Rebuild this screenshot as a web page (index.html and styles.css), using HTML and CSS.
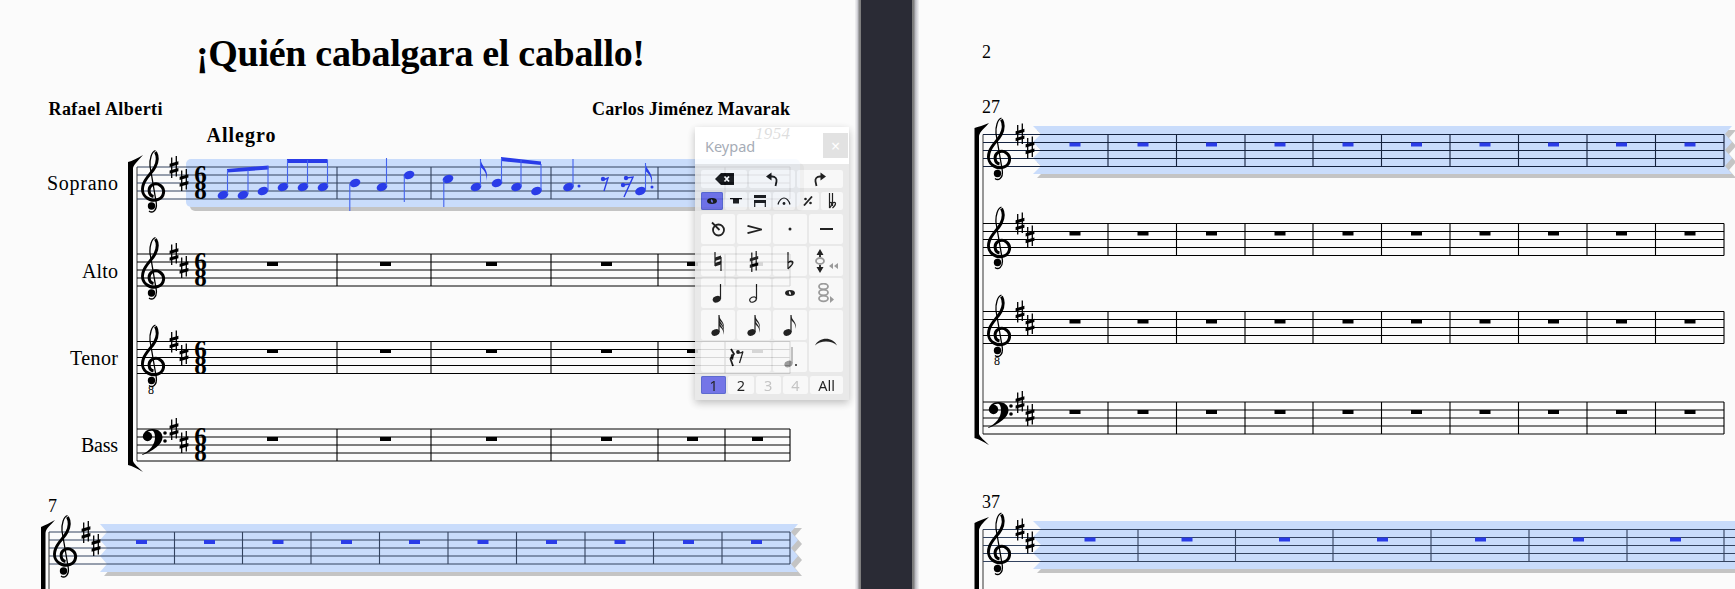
FILE: index.html
```html
<!DOCTYPE html>
<html lang="es">
<head>
<meta charset="utf-8">
<title>¡Quién cabalgara el caballo!</title>
<link rel="stylesheet" href="styles.css">
</head>
<body>
<svg class="defs" width="0" height="0" aria-hidden="true">
  <defs>
    <g id="treble">
      <path class="thick" d="M11.500 5.500C6.500 4.500 5.500-3 10-6C16-9.500 22.500-4 21.500 2C20.500 8.500 13 10.500 8 8.500C1.500 6-1 0 1.500-7C4-14 10-18 13-24C15.500-29 15.800-35 13.500-39"/>
      <path class="thin" d="M13.500-40.500C9.500-39 7.500-32 8-25L14.300 12C15.300 20 10 22.500 7 20"/>
      <circle cx="9.500" cy="15" r="3.700"/>
    </g>
    <g id="bass">
      <path d="M0 25.500C8 22 13 15 13 8.500C13 3.500 11.500 1.800 9.500 1.800C7 1.800 5 3 4.500 5L1.500 7C1.500 3 5 0 10.500 0C16.500 0 20.500 3.500 20.500 8.500C20.500 15.500 10 22.500 .5 26Z"/>
      <circle cx="5.500" cy="7.500" r="4.700"/>
      <circle cx="23" cy="4" r="1.800"/>
      <circle cx="23" cy="12" r="1.800"/>
    </g>
    <g id="sharp">
      <path class="thin" d="M-2.300-9.500V11M2.300-11V9.500"/>
      <path d="M-4.400-3.200 4.400-5.700V-2.500L-4.400 0ZM-4.400 3.500 4.400 1V4.200L-4.400 6.700Z"/>
    </g>
    <g id="headT">
      <use href="#treble" y="24"/>
      <use href="#sharp" x="32"/>
      <use href="#sharp" x="42" y="13"/>
    </g>
    <g id="headB">
      <use href="#bass"/>
      <use href="#sharp" x="32"/>
      <use href="#sharp" x="42" y="13"/>
    </g>
    <g id="timeSig">
      <text class="time" x="200.500" y="16">6</text>
      <text class="time" x="200.500" y="32">8</text>
    </g>
    <g id="staffL">
      <path class="ln" d="M137 0H790M137 8H790M137 16H790M137 24H790M137 32H790"/>
      <path class="ln bar" d="M337 0V32M431 0V32M551 0V32M658 0V32M725 0V32M790 0V32"/>
    </g>
    <g id="restsL" class="rest">
      <rect x="267" y="8" width="11" height="4"/><rect x="380" y="8" width="11" height="4"/>
      <rect x="486" y="8" width="11" height="4"/><rect x="601" y="8" width="11" height="4"/>
      <rect x="687" y="8" width="11" height="4"/><rect x="752" y="8" width="11" height="4"/>
    </g>
    <g id="staffR">
      <path class="ln" d="M983 0H1724M983 8H1724M983 16H1724M983 24H1724M983 32H1724"/>
      <path class="ln bar" d="M1108 0V32M1176.500 0V32M1245 0V32M1313 0V32M1381.500 0V32M1450 0V32M1518.500 0V32M1587 0V32M1655.500 0V32M1724 0V32"/>
      <g class="rest">
        <rect x="1069.500" y="8" width="11" height="4"/><rect x="1137.500" y="8" width="11" height="4"/>
        <rect x="1206" y="8" width="11" height="4"/><rect x="1274.500" y="8" width="11" height="4"/>
        <rect x="1342.500" y="8" width="11" height="4"/><rect x="1411" y="8" width="11" height="4"/>
        <rect x="1479.500" y="8" width="11" height="4"/><rect x="1548" y="8" width="11" height="4"/>
        <rect x="1616" y="8" width="11" height="4"/><rect x="1684.500" y="8" width="11" height="4"/>
      </g>
    </g>
    <path id="bandL" d="M100 0 107 8 100 16 107 24 100 32 107 40 100 48H798L791 40 798 32 791 24 798 16 791 8 798 0Z"/>
    <path id="bandR" d="M1033 0 1041 8 1033 16 1041 24 1033 32 1041 40 1033 48H1732L1725 40 1732 32 1725 24 1732 16 1725 8 1732 0Z"/>
    <path id="flag" d="M0 0C1 8 9 10 6 22C7 13 2 10 0 8Z"/>
    <path id="kflag" d="M0 0C.5 5 6.500 7 4.500 14C5 8.500 1.500 6.500 0 5Z"/>
    <symbol id="i-undo" viewBox="0 0 14 15"><path class="ik" d="M4 4.500H7C10.500 4.500 12 7 11.500 9.500L10.500 14"/><path d="M6.500 .5 1 4.500 6.500 8.500Z"/></symbol>
    <symbol id="i-sharp" viewBox="-5 -11 10 22"><use href="#sharp"/></symbol>
    <symbol id="i-q" viewBox="0 0 12 20"><ellipse cx="4.800" cy="16.300" rx="4.200" ry="3.200" transform="rotate(-20 4.800 16.300)"/><path class="ik1" d="M8.500 1V16"/></symbol>
  </defs>
</svg>

<main class="app">
  <section class="page page-left">
    <svg class="score" viewBox="0 0 855 589" width="855" height="589">
      <text class="title" x="196" y="66" textLength="449">¡Quién cabalgara el caballo!</text>
      <text class="credit" x="48.500" y="115" textLength="114">Rafael Alberti</text>
      <text class="credit" x="592" y="115" textLength="198">Carlos Jiménez Mavarak</text>
      <text class="tempo" x="206.500" y="142" textLength="69">Allegro</text>
      <text class="year" x="755" y="139" textLength="35">1954</text>
      <text class="part" x="47" y="190" textLength="71">Soprano</text>
      <text class="part" x="82" y="278" textLength="36">Alto</text>
      <text class="part" x="70" y="365" textLength="48">Tenor</text>
      <text class="part" x="81" y="452" textLength="37">Bass</text>

      <rect class="shade" x="190" y="163" width="614" height="48" rx="5"/>
      <rect class="band" x="186" y="159" width="614" height="48" rx="5"/>

      <path class="brace" d="M128 162C132 161 138 158 143 155C139 160 134 164 133 168V461C134 464 139 468 143 472C138 469 132 466 128 465Z"/>
      <path class="sysbar" d="M137 167V461"/>

      <use class="sel" href="#staffL" y="167"/>
      <use href="#staffL" y="254"/>
      <use href="#restsL" y="254"/>
      <use class="crisp" href="#staffL" y="341.500"/>
      <use href="#restsL" y="341"/>
      <use href="#staffL" y="429"/>
      <use href="#restsL" y="429"/>

      <use href="#headT" x="142" y="167"/>
      <use href="#headT" x="142" y="254"/>
      <use href="#headT" x="142" y="341.500"/>
      <text class="octave" x="148" y="394">8</text>
      <use href="#headB" x="142" y="429"/>
      <use class="ts-sel" href="#timeSig" y="167"/>
      <use href="#timeSig" y="254"/>
      <use href="#timeSig" y="341.500"/>
      <use href="#timeSig" y="429"/>

      <g class="notes">
        <ellipse cx="223" cy="195" rx="5.500" ry="3.900" transform="rotate(-20 223 195)"/>
        <ellipse cx="243" cy="195" rx="5.500" ry="3.900" transform="rotate(-20 243 195)"/>
        <ellipse cx="263" cy="191" rx="5.500" ry="3.900" transform="rotate(-20 263 191)"/>
        <ellipse cx="283" cy="187" rx="5.500" ry="3.900" transform="rotate(-20 283 187)"/>
        <ellipse cx="303" cy="187" rx="5.500" ry="3.900" transform="rotate(-20 303 187)"/>
        <ellipse cx="323" cy="187" rx="5.500" ry="3.900" transform="rotate(-20 323 187)"/>
        <ellipse cx="355" cy="183" rx="5.500" ry="3.900" transform="rotate(-20 355 183)"/>
        <ellipse cx="382" cy="187" rx="5.500" ry="3.900" transform="rotate(-20 382 187)"/>
        <ellipse cx="409" cy="175" rx="5.500" ry="3.900" transform="rotate(-20 409 175)"/>
        <ellipse cx="448" cy="179" rx="5.500" ry="3.900" transform="rotate(-20 448 179)"/>
        <ellipse cx="476" cy="187" rx="5.500" ry="3.900" transform="rotate(-20 476 187)"/>
        <ellipse cx="497" cy="183" rx="5.500" ry="3.900" transform="rotate(-20 497 183)"/>
        <ellipse cx="516.500" cy="187" rx="5.500" ry="3.900" transform="rotate(-20 516.500 187)"/>
        <ellipse cx="536.500" cy="191" rx="5.500" ry="3.900" transform="rotate(-20 536.500 191)"/>
        <ellipse cx="568.500" cy="187" rx="5.500" ry="3.900" transform="rotate(-20 568.500 187)"/>
        <ellipse cx="640.500" cy="191" rx="5.500" ry="3.900" transform="rotate(-20 640.500 191)"/>
        <circle cx="579" cy="186" r="1.500"/>
        <circle cx="603" cy="179" r="2.200"/>
        <circle cx="626" cy="178" r="2.200"/>
        <circle cx="623" cy="185" r="2.200"/>
        <circle cx="652" cy="187" r="1.500"/>
        <path d="M227 169 268.500 165.500V169.500L227 172.500ZM287 159H327.500V163H287ZM501 157 541 161.500V165L501 161Z"/>
        <use href="#flag" x="480.500" y="159"/>
        <use href="#flag" x="645.500" y="163"/>
        <path class="stem" d="M227.500 170V194M248 170V194M268 166V190M287.500 160V186M307.500 160V186M327.500 160V186M349.800 184V211M386.500 158V186M404.300 176V202M443.800 180V207M480.500 159V186M501.500 158V182M521 160V186M541 164V190M573 159V186M645.500 163V190"/>
        <path class="stem rstem" d="M603 180 608 178 604 191M626 178 633 177 624 197M623 185 630 184"/>
      </g>

      <use class="shade" href="#bandL" x="4" y="528"/>
      <use class="band" href="#bandL" y="524"/>
      <text class="num" x="48" y="512">7</text>
      <path class="brace" d="M41 527C45 525 50 523 55 520C51 525 46 528 45.500 533V589H41Z"/>
      <path class="sysbar" d="M49 532V589"/>
      <g class="sel">
        <path class="ln" d="M49 532H790M49 540H790M49 548H790M49 556H790M49 564H790"/>
        <path class="ln bar" d="M174.500 532V564M242.500 532V564M311 532V564M379.500 532V564M448 532V564M516.500 532V564M585 532V564M653.500 532V564M722 532V564M790 532V564"/>
        <g class="rest">
          <rect x="136" y="540" width="11" height="4"/><rect x="204" y="540" width="11" height="4"/>
          <rect x="272.500" y="540" width="11" height="4"/><rect x="341" y="540" width="11" height="4"/>
          <rect x="409" y="540" width="11" height="4"/><rect x="477.500" y="540" width="11" height="4"/>
          <rect x="546" y="540" width="11" height="4"/><rect x="614.500" y="540" width="11" height="4"/>
          <rect x="683" y="540" width="11" height="4"/><rect x="751" y="540" width="11" height="4"/>
        </g>
      </g>
      <use href="#headT" x="54" y="532"/>
    </svg>

    <aside class="keypad">
      <header class="kp-title">
        <span class="kp-name">Keypad</span>
        <span class="kp-close">×</span>
      </header>
      <div class="kp-body">
        <div class="kp-row">
          <button class="key">
            <svg width="19" height="12" viewBox="0 0 19 12"><path d="M0 6 6 0H19V12H6Z"/><path class="kx" d="M9.500 3.500 14 8.500M14 3.500 9.500 8.500"/></svg>
          </button>
          <button class="key"><svg width="14" height="15"><use href="#i-undo"/></svg></button>
          <button class="key"><svg class="flip" width="14" height="15"><use href="#i-undo"/></svg></button>
        </div>
        <div class="kp-row">
          <button class="key on"><svg width="10" height="6" viewBox="0 0 10 6"><path fill-rule="evenodd" d="M5 0C8 0 10 1.300 10 3S8 6 5 6 0 4.700 0 3 2 0 5 0ZM4.300 1.300C3.600 1.500 3.800 3.200 4.400 4.200 5 4.900 6 4.800 6 4 6 3 5.200 1 4.300 1.300Z"/></svg></button>
          <button class="key"><svg width="12" height="6" viewBox="0 0 12 6"><path d="M0 0H12V1.300H9V5.500H3V1.300H0Z"/></svg></button>
          <button class="key"><svg width="12" height="12" viewBox="0 0 12 12"><path d="M0 0H12V3H0ZM0 5H12V8H0Z"/><path class="ik1" d="M.7 8V12M11.300 8V12"/></svg></button>
          <button class="key"><svg width="14" height="8" viewBox="0 0 14 8"><path class="ik1" d="M1 7.500C2 3 5 1 7 1S12 3 13 7.500"/><circle cx="7" cy="6.500" r="1.400"/></svg></button>
          <button class="key"><svg width="10" height="10" viewBox="0 0 10 10"><path class="ik" d="M1 9.500 9 .5"/><circle cx="2.500" cy="3" r="1.300"/><circle cx="7.500" cy="7" r="1.300"/></svg></button>
          <button class="key"><svg width="9" height="17" viewBox="0 0 9 17"><path class="ik1" d="M1.500 0V15M4.500 0V13"/><path class="ik1" d="M1.500 10C4 8 5 11 1.500 15M4.500 10C8 8 9 11 4.500 15"/></svg></button>
        </div>
        <div class="kp-grid">
          <button class="key"><svg width="16" height="16" viewBox="0 0 16 16"><circle class="ik" cx="8.500" cy="9" r="5.500"/><path class="ik" d="M2 1.500 9.500 9"/></svg></button>
          <button class="key"><svg width="15" height="9" viewBox="0 0 15 9"><path class="ik" d="M.5 .8 14.500 4.500.5 8.200"/></svg></button>
          <button class="key"><svg width="4" height="4" viewBox="0 0 4 4"><circle cx="2" cy="2" r="1.500"/></svg></button>
          <button class="key"><svg width="13" height="2" viewBox="0 0 13 2"><path d="M0 0H13V2H0Z"/></svg></button>

          <button class="key"><svg width="8" height="19" viewBox="0 0 8 19"><path class="ik1" d="M1 0V14M7 5V19"/><path d="M1 5.500 7 3.500V7L1 9ZM1 11 7 9V12.500L1 14.500Z"/></svg></button>
          <button class="key"><svg width="10" height="21"><use href="#i-sharp"/></svg></button>
          <button class="key"><svg width="7" height="18" viewBox="0 0 7 18"><path class="ik1" d="M1 0V17"/><path d="M1 10C4 7.500 7 8.500 6.500 11 6 13.500 3 15.500 1 17.500V15.500C3 14 4.800 12.500 4.800 11 4.800 9.800 3 9.800 1 11.500Z"/></svg></button>
          <button class="key"><svg width="26" height="24" viewBox="0 0 26 24"><path d="M7 0 10.500 6H3.500ZM7 24 10.500 18H3.500Z"/><path class="ik" d="M7 5V8M7 16V19"/><ellipse class="gh" cx="7" cy="12" rx="4" ry="3"/><path class="g" d="M20 14V20L16 17ZM25 14V20L21 17Z"/></svg></button>

          <button class="key"><svg width="12" height="20"><use href="#i-q"/></svg></button>
          <button class="key"><svg width="12" height="20" viewBox="0 0 12 20"><ellipse class="ik1" cx="5" cy="16.500" rx="3.400" ry="2.400" transform="rotate(-25 5 16.500)"/><path class="ik1" d="M8.500 1V16"/></svg></button>
          <button class="key"><svg class="low" width="10" height="6" viewBox="0 0 10 6"><path fill-rule="evenodd" d="M5 0C8 0 10 1.300 10 3S8 6 5 6 0 4.700 0 3 2 0 5 0ZM4.300 1.300C3.600 1.500 3.800 3.200 4.400 4.200 5 4.900 6 4.800 6 4 6 3 5.200 1 4.300 1.300Z"/></svg></button>
          <button class="key"><svg width="16" height="20" viewBox="0 0 16 20"><g class="gh"><ellipse cx="5.500" cy="3.500" rx="4.500" ry="2.800"/><ellipse cx="5.500" cy="9.500" rx="4.500" ry="2.800"/><ellipse cx="5.500" cy="15.500" rx="4.500" ry="2.800"/></g><path class="g" d="M12 13 16 16.500 12 20Z"/></svg></button>

          <button class="key"><svg width="14" height="21" viewBox="0 0 14 21"><ellipse cx="4.500" cy="17.500" rx="4.200" ry="3.200" transform="rotate(-20 4.500 17.500)"/><path class="ik1" d="M8 0V17"/><use href="#kflag" x="8" y="0"/><use href="#kflag" x="8" y="3"/><use href="#kflag" x="8" y="6"/></svg></button>
          <button class="key"><svg width="14" height="21" viewBox="0 0 14 21"><ellipse cx="4.500" cy="17.500" rx="4.200" ry="3.200" transform="rotate(-20 4.500 17.500)"/><path class="ik1" d="M8 0V17"/><use href="#kflag" x="8" y="0"/><use href="#kflag" x="8" y="4"/></svg></button>
          <button class="key"><svg width="14" height="21" viewBox="0 0 14 21"><ellipse cx="4.500" cy="17.500" rx="4.200" ry="3.200" transform="rotate(-20 4.500 17.500)"/><path class="ik1" d="M8 0V17"/><use href="#kflag" x="8" y="0"/></svg></button>
          <button class="key slur"><svg width="22" height="9" viewBox="0 0 22 9"><path d="M0 8.500C4-.5 18-.5 22 8.500C17 3 5 3 0 8.500Z"/></svg></button>

          <button class="key wide"><svg width="17" height="19" viewBox="0 0 17 19"><path class="ik" d="M3 1 6 6 2.500 11 5 18"/><path d="M3 6.500 6 6 5 12 2.500 10.500Z"/><circle cx="10" cy="4" r="1.900"/><path class="ik1" d="M9.500 4C11.500 5.500 13 5.500 15 3.500L11.500 15"/></svg></button>
          <button class="key"><svg class="dim" width="13" height="21" viewBox="0 0 13 21"><ellipse cx="4.500" cy="17" rx="4.200" ry="3.200" transform="rotate(-20 4.500 17)"/><path class="ik1" d="M8 0V16"/><circle class="dark" cx="12" cy="18" r="1"/></svg></button>
        </div>
        <div class="kp-tabs">
          <button class="tab on">1</button>
          <button class="tab">2</button>
          <button class="tab off">3</button>
          <button class="tab off">4</button>
          <button class="tab all">All</button>
        </div>
      </div>
    </aside>
  </section>

  <div class="gutter"></div>

  <section class="page page-right">
    <svg class="score" viewBox="919 0 816 589" width="816" height="589">
      <text class="num" x="982" y="58">2</text>
      <text class="num" x="982" y="113">27</text>
      <text class="num" x="982" y="508">37</text>

      <use class="shade" href="#bandR" x="4" y="130"/>
      <use class="band" href="#bandR" y="126"/>
      <path class="shade" d="M1037 565H1735V573H1037L1041 569Z"/>
      <path class="band" d="M1033 521 1041 529 1033 537 1041 545 1033 553 1041 561 1033 569H1735V521Z"/>

      <path class="brace" d="M974.500 128C978 127 984 125 989 123C985 128 980 131 979 136V434C980 437 985 441 989 445C984 442 978 439 974.500 438Z"/>
      <path class="sysbar" d="M983 134.500V434"/>
      <use class="sel crisp" href="#staffR" y="134.500"/>
      <use href="#staffR" y="223.500"/>
      <use class="crisp" href="#staffR" y="311.500"/>
      <use href="#staffR" y="402"/>
      <use href="#headT" x="988" y="134.500"/>
      <use href="#headT" x="988" y="223.500"/>
      <use href="#headT" x="988" y="311.500"/>
      <text class="octave" x="994" y="365">8</text>
      <use href="#headB" x="988" y="402"/>

      <path class="brace" d="M974.500 523C978 521 984 519 989 517C985 521 980 525 979 530V589H974.500Z"/>
      <path class="sysbar" d="M983 529.500V589"/>
      <g class="sel">
        <path class="ln" d="M983 529.500H1735M983 537.500H1735M983 545.500H1735M983 553.500H1735M983 561.500H1735"/>
        <path class="ln bar" d="M1138 529.500V561.500M1235.500 529.500V561.500M1333 529.500V561.500M1431 529.500V561.500M1529 529.500V561.500M1627 529.500V561.500M1724 529.500V561.500"/>
        <g class="rest">
          <rect x="1084.500" y="537.500" width="11" height="4"/><rect x="1181.500" y="537.500" width="11" height="4"/>
          <rect x="1279" y="537.500" width="11" height="4"/><rect x="1377" y="537.500" width="11" height="4"/>
          <rect x="1475" y="537.500" width="11" height="4"/><rect x="1573" y="537.500" width="11" height="4"/>
          <rect x="1670" y="537.500" width="11" height="4"/>
        </g>
      </g>
      <use href="#headT" x="988" y="529.500"/>
    </svg>
  </section>
</main>
</body>
</html>
```
FILE: styles.css
```css
* { box-sizing: border-box; }
html, body { margin: 0; height: 100%; overflow: hidden; background: #fbfbfb; }
.defs { position: absolute; }
.app { display: flex; width: 1735px; height: 589px; overflow: hidden; }
.page { position: relative; height: 589px; background: #fbfbfb; flex: none; }
.page-left { width: 855px; }
.page-right { width: 816px; }
.score { display: block; fill: #000; --line: #000; --rest: #000; }
.gutter {
  flex: none;
  width: 64px;
  background: linear-gradient(90deg,
    #f2f2f3 0, #d9d9de 2px, #bdbdc4 3px, #8a8a8a 4px, #7a7a7a 6px,
    #2a2b35 6px, #2a2b35 57px,
    #7a7a7a 57px, #808080 59px, #b4b4ba 60px, #d6d6db 62px, #f4f4f5 64px);
}

text { font-family: "Liberation Serif", serif; fill: #000; }
.title { font-size: 38px; font-weight: 700; }
.credit { font-size: 18px; font-weight: 700; }
.tempo { font-size: 20px; font-weight: 700; }
.year { font-size: 17px; font-style: italic; }
.part { font-size: 20px; }
.num { font-size: 18px; }
.time { font-size: 25px; font-weight: 700; text-anchor: middle; }
.octave { font-size: 12px; }

.thick { fill: none; stroke: #000; stroke-width: 3; }
.thin { fill: none; stroke: #000; stroke-width: 1.300; }
.band { fill: #c9dcfb; }
.shade { fill: #c4c4c4; }
.brace { fill: #000; }
.sysbar { stroke: #555; stroke-width: 1.200; fill: none; }
.ln { fill: none; stroke: var(--line); stroke-width: 1; }
.bar { stroke-width: 1.100; }
.rest rect { fill: var(--rest); }
.sel { --line: #33435f; --rest: #2a3ce8; }
.ts-sel text { fill: #2c3f63; }
.crisp { --line: #000; }
.sel.crisp { --line: #14223e; }
.notes { fill: #2a3ce8; }
.stem { fill: none; stroke: #4463ee; stroke-width: 1.100; }
.rstem { stroke: #2a3ce8; stroke-width: 1.400; }

.keypad {
  position: absolute;
  left: 695px;
  top: 127px;
  width: 154px;
  height: 273px;
  background: #e6e6e6;
  box-shadow: 0 3px 8px rgba(0, 0, 0, .28);
  opacity: .87;
  font-family: "Noto Sans", sans-serif;
}
.kp-title {
  display: flex;
  align-items: center;
  justify-content: space-between;
  height: 37px;
  padding: 0 1px 0 10px;
  background: #fff;
}
.kp-name { font-size: 14.500px; color: #98a0ac; }
.kp-close {
  width: 25px;
  height: 25px;
  display: flex;
  align-items: center;
  justify-content: center;
  background: #dedede;
  color: #fff;
  font-size: 16px;
}
.kp-body { display: flex; flex-direction: column; padding: 6px 6px 0; }
.kp-row { display: flex; gap: 2px; height: 18px; margin-bottom: 4px; }
.kp-row .key { flex: 1 1 0; min-width: 0; }
.kp-grid {
  display: grid;
  grid-template-columns: repeat(4, 34px);
  grid-template-rows: repeat(5, 30px);
  gap: 2px;
  margin-bottom: 4px;
}
.key {
  display: flex;
  align-items: center;
  justify-content: center;
  padding: 0;
  border: 0;
  border-radius: 2px;
  background: #f7f7f7;
}
.key svg { display: block; fill: #000; }
.key.on { background: #5f60e4; box-shadow: inset 0 0 0 1px #4555c8; }
.key.slur { grid-column: 4; grid-row: 4 / span 2; }
.key.wide { grid-column: 1 / span 2; grid-row: 5; }
.flip { transform: scaleX(-1); }
.ik { fill: none; stroke: #000; stroke-width: 1.800; }
.ik1 { fill: none; stroke: #000; stroke-width: 1.200; }
.kx { fill: none; stroke: #fff; stroke-width: 1.800; }
.gh { fill: none; stroke: #8c8c8c; stroke-width: 1.800; }
.g { fill: #8c8c8c; }
.low { opacity: 1; }
.key .dim { fill: #8c8c8c; }
.dim .ik1 { stroke: #8c8c8c; }
.dim .dark { fill: #000; }
.kp-tabs { display: flex; gap: 2px; height: 18px; }
.tab {
  flex: 1 1 0;
  min-width: 0;
  padding: 0;
  border: 0;
  border-radius: 2px;
  background: #f7f7f7;
  font-family: "Noto Sans", sans-serif;
  font-size: 14.500px;
  line-height: 18px;
  color: #000;
}
.tab.on { background: #5f60e4; box-shadow: inset 0 0 0 1px #4555c8; }
.tab.off { color: #bbb; }
.tab.all { flex: 1.300 1 0; }
```
